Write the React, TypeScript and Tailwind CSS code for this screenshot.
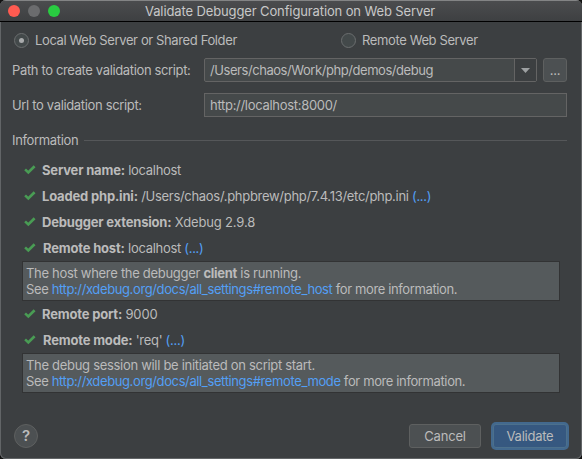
import type { ReactNode } from "react";

function Check() {
  return (
    <svg width="12" height="10" viewBox="0 0 12 10" className="shrink-0" fill="none">
      <path d="M1.1 4.4 4.3 7.4 10.6 1.2" stroke="#499c54" strokeWidth="2.6" />
    </svg>
  );
}

function Row({ label, indent, children }: { label: string; indent?: boolean; children: ReactNode }) {
  return (
    <div className="flex h-[26px] items-center pl-6">
      <Check />
      <div className={indent ? "ml-[7px] whitespace-pre" : "ml-[6px] whitespace-pre"}>
        <b className="font-bold tracking-[-0.18px]">{label}</b> {children}
      </div>
    </div>
  );
}

function Link({ children }: { children: ReactNode }) {
  return <span className="text-[#539ff5]">{children}</span>;
}

function Note({ children }: { children: ReactNode }) {
  return (
    <div className="ml-[22px] h-[40px] w-[538px] border border-[#323334] bg-[#555a5c] pl-[3px] pt-[3px] leading-4 whitespace-pre">
      {children}
    </div>
  );
}

export default function App() {
  return (
    <div className="h-[459px] w-[582px] overflow-hidden bg-[#111111]">
      <div className="flex h-full flex-col overflow-hidden rounded-[6px] bg-[#3c3f41] font-['Inter','Liberation_Sans',sans-serif] text-[13px] leading-4 tracking-[-0.3px] text-[#bbbbbb] shadow-[inset_1px_0_#626567,inset_-1px_0_#626567,inset_0_-1px_#626567]">
        <header className="flex h-[22px] shrink-0 items-center border-t border-b border-t-[#838485] border-b-black bg-linear-to-b from-[#4b4c4e] to-[#3e4042] pl-2">
          <div className="flex gap-2">
            <i className="size-3 rounded-full bg-[#ff5b51]" />
            <i className="size-3 rounded-full bg-[#6b6c6e]" />
            <i className="size-3 rounded-full bg-[#29cc41]" />
          </div>
          <h1 className="ml-[85px] whitespace-nowrap tracking-[-0.12px] text-[#c8c8c8]">Validate Debugger Configuration on Web Server</h1>
        </header>

        <div className="flex h-[36px] shrink-0 items-center pl-[14px] tracking-[-0.38px]">
          <div className="flex w-[327px] items-center gap-[6px]">
            <span className="flex size-[15px] items-center justify-center rounded-full border border-[#6b6e6f] bg-[#43494a]">
              <i className="size-[5px] rounded-full bg-[#a9abac]" />
            </span>
            <span>Local Web Server or Shared Folder</span>
          </div>
          <div className="flex items-center gap-[6px]">
            <span className="size-[15px] rounded-full border border-[#6b6e6f] bg-[#43494a]" />
            <span>Remote Web Server</span>
          </div>
        </div>

        <div className="flex h-6 shrink-0 items-center pl-3">
          <span className="w-[192px] whitespace-nowrap tracking-[-0.36px]">Path to create validation script:</span>
          <div className="flex h-6 w-[333px] rounded-[2px] border border-[#646464] bg-[#45494a]">
            <span className="flex flex-1 items-center pl-[5px] tracking-[-0.44px]">/Users/chaos/Work/php/demos/debug</span>
            <span className="flex w-[22px] items-center justify-center border-l border-[#646464] bg-[#3c3f41]">
              <svg width="9" height="5" viewBox="0 0 9 5"><path d="M0 0h9L4.5 5z" fill="#9da0a2" /></svg>
            </span>
          </div>
          <span className="ml-[6px] flex h-6 w-6 items-center justify-center rounded-[3px] border border-[#5e6060] bg-[#4c5052]">...</span>
        </div>

        <div className="mt-[11px] flex h-6 shrink-0 items-center pl-3">
          <span className="w-[192px] tracking-[-0.34px]">Url to validation script:</span>
          <div className="flex h-6 w-[363px] items-center border border-[#646464] bg-[#45494a] pl-[5px]">http://localhost:8000/</div>
        </div>

        <div className="mt-[15px] flex h-4 shrink-0 items-center pl-3">
          <span className="w-[72px] tracking-[-0.35px]">Information</span>
          <i className="h-px w-[483px] bg-[#555759]" />
        </div>

        <div className="mt-[9px]">
          <Row label="Server name:">localhost</Row>
          <Row label="Loaded php.ini:">/Users/chaos/.phpbrew/php/7.4.13/etc/php.ini <Link>(...)</Link></Row>
          <Row label="Debugger extension:"><span className="tracking-[-0.15px]">Xdebug 2.9.8</span></Row>
          <Row indent label="Remote host:">localhost <Link>(...)</Link></Row>
          <Note>
            <p>The host where the debugger <b className="font-bold">client</b> is running.</p>
            <p className="tracking-[-0.38px]">See <Link>http://xdebug.org/docs/all_settings#remote_host</Link> for more information.</p>
          </Note>
          <Row label="Remote port:"><span className="tracking-[-0.15px]">9000</span></Row>
          <Row indent label="Remote mode:">'req' <Link>(...)</Link></Row>
          <Note>
            <p>The debug session will be initiated on script start.</p>
            <p className="tracking-[-0.38px]">See <Link>http://xdebug.org/docs/all_settings#remote_mode</Link> for more information.</p>
          </Note>
        </div>

        <footer className="mt-[28px] flex h-[30px] shrink-0 items-center pl-[14px]">
          <button className="flex size-6 items-center justify-center rounded-full border border-[#5e6060] bg-[#4c5052] text-[15px] font-semibold">?</button>
          <button className="ml-[371px] h-6 w-[72px] rounded-[3px] border border-[#5e6060] bg-[#4c5052] tracking-[-0.2px]">Cancel</button>
          <button className="ml-[12px] h-6 w-[74px] rounded-[3px] border border-[#4c708c] bg-[#365880] tracking-[-0.25px] shadow-[0_0_0_2px_#43698e]">Validate</button>
        </footer>
      </div>
    </div>
  );
}
